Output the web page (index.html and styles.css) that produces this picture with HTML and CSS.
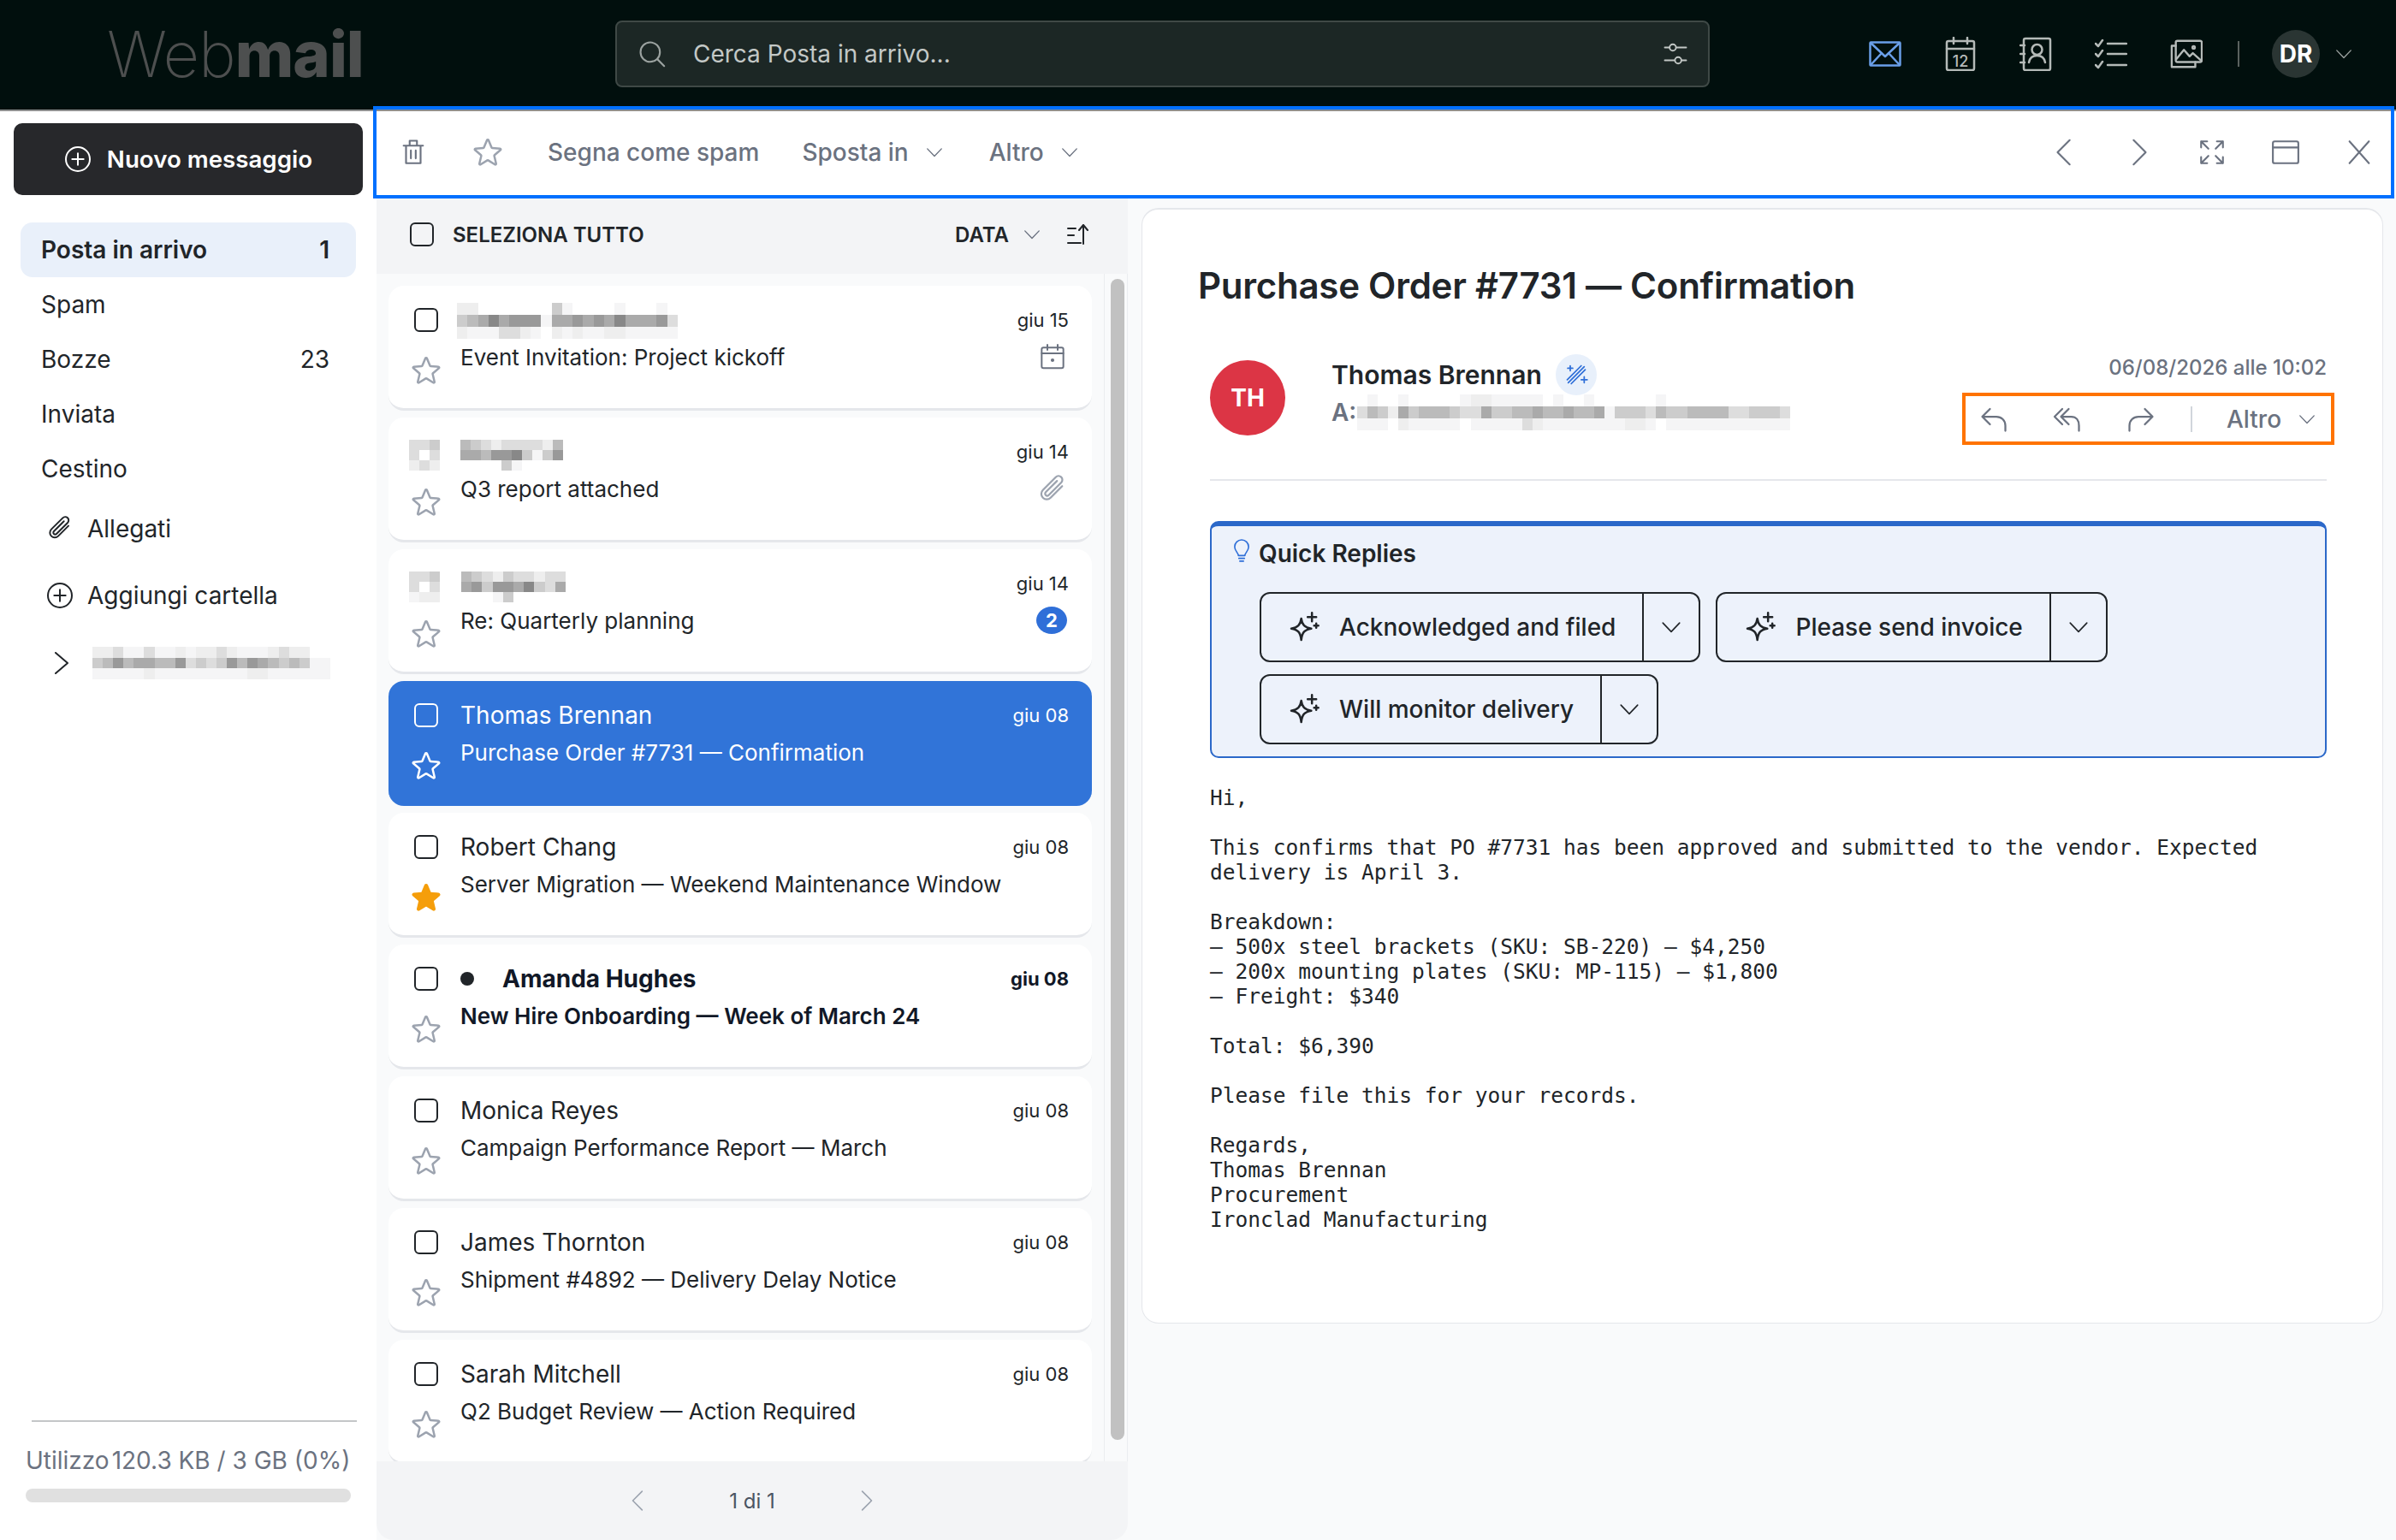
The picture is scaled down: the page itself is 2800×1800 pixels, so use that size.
FILE: index.html
```html
<!DOCTYPE html>
<html lang="it">
<head>
    <meta charset="UTF-8">
    <title>Webmail</title>
    <link rel="stylesheet" href="styles.css">
</head>
<body>
    <svg class="defs" width="0" height="0">
        <symbol id="i-star" viewBox="0 0 24 24"><path d="M11.48 3.499a.562.562 0 0 1 1.04 0l2.125 5.111a.563.563 0 0 0 .475.345l5.518.442c.499.04.701.663.321.988l-4.204 3.602a.563.563 0 0 0-.182.557l1.285 5.385a.562.562 0 0 1-.84.61l-4.725-2.885a.562.562 0 0 0-.586 0L6.982 20.54a.562.562 0 0 1-.84-.61l1.285-5.386a.562.562 0 0 0-.182-.557l-4.204-3.602a.562.562 0 0 1 .321-.988l5.518-.442a.563.563 0 0 0 .475-.345L11.48 3.5Z"/></symbol>
        <symbol id="i-down" viewBox="0 0 24 24"><path d="M3 7.500l9 9.500 9-9.500"/></symbol>
        <symbol id="i-left" viewBox="0 0 24 24"><path d="M16 2L6 12l10 10"/></symbol>
        <symbol id="i-right" viewBox="0 0 24 24"><path d="M8 2l10 10L8 22"/></symbol>
        <symbol id="i-plus-circle" viewBox="0 0 24 24"><circle cx="12" cy="12" r="10.500"/><path d="M12 7v10M7 12h10"/></symbol>
        <symbol id="i-clip" viewBox="0 0 24 24"><path d="M19.500 9.500l-9 9a4.200 4.200 0 0 1-6-6l10-10a3 3 0 0 1 4.300 4.200l-9.800 9.800a1.600 1.600 0 0 1-2.300-2.300l8.800-8.800"/></symbol>
        <symbol id="i-sparkle" viewBox="0 0 24 24"><path d="M10 6c.6 4.400 2.400 6.200 7 7-4.600.8-6.400 2.600-7 8-.6-5.400-2.400-7.200-7-8 4.600-.8 6.400-2.600 7-7zM17.500 2v6M14.500 5h6M20.500 9.500v3M19 11h3"/></symbol>
    </svg>

    <header class="topbar">
        <div class="logo"><span class="logo-web">Web</span><span class="logo-mail">mail</span></div>
        <div class="search">
            <svg class="search-icon" viewBox="0 0 24 24"><circle cx="10.500" cy="10.500" r="8"/><path d="M16.500 16.500L22 22"/></svg>
            <span class="search-text">Cerca Posta in arrivo...</span>
            <svg class="search-filter" viewBox="0 0 24 24"><path d="M13 6h9M2 18h9M2 6h4M18 18h4"/><circle cx="9.500" cy="6" r="3"/><circle cx="14.500" cy="18" r="3"/></svg>
        </div>
        <nav class="apps">
            <svg class="app-icon app-mail" viewBox="0 0 38 30"><rect x="1.500" y="1.500" width="35" height="27" rx="1"/><path d="M2 2l17 16L36 2M2 28l13-14M36 28L23 14"/></svg>
            <svg class="app-icon" viewBox="0 0 38 40"><rect x="3" y="5" width="32" height="34" rx="2"/><path d="M3 14h32M11 1v7M27 1v7"/><text class="cal-day" x="19" y="35" text-anchor="middle">12</text></svg>
            <svg class="app-icon" viewBox="0 0 38 40"><rect x="5" y="2" width="31" height="37" rx="2"/><path d="M1 10h5M1 20h5M1 30h5"/><circle cx="20.500" cy="15" r="6"/><path d="M11 30c1-6 5-8 9.500-8s8.500 2 9.500 8"/></svg>
            <svg class="app-icon" viewBox="0 0 38 36"><path d="M1 6l3 3 5-7M1 18l3 3 5-7M1 31l3 3 5-7M15 6h22M15 18h22M15 31h22"/></svg>
            <svg class="app-icon" viewBox="0 0 40 36"><rect x="7" y="2" width="32" height="26" rx="2"/><path d="M7 8H2v26h29v-6M8 24l9-11 7 8 4-4 10 9"/><circle cx="29" cy="10" r="1.500"/></svg>
            <span class="apps-sep"></span>
            <span class="user">DR</span>
            <svg class="chev user-chev" viewBox="0 0 24 24"><use href="#i-down"/></svg>
        </nav>
    </header>

    <div class="main">
        <aside class="sidebar">
            <button class="compose"><svg class="compose-icon"><use href="#i-plus-circle"/></svg>Nuovo messaggio</button>
            <ul class="folders">
                <li class="folder active"><span>Posta in arrivo</span><span>1</span></li>
                <li class="folder"><span>Spam</span></li>
                <li class="folder"><span>Bozze</span><span>23</span></li>
                <li class="folder"><span>Inviata</span></li>
                <li class="folder"><span>Cestino</span></li>
            </ul>
            <div class="side-link side-clip"><svg class="side-icon"><use href="#i-clip"/></svg>Allegati</div>
            <div class="side-link side-add"><svg class="side-icon"><use href="#i-plus-circle"/></svg>Aggiungi cartella</div>
            <div class="side-link side-account">
                <svg class="side-chev" viewBox="0 0 18 26"><path d="M2 1l14 12L2 25"/></svg>
                <div class="blur blur-account" data-rows="eedffdffefeedefffedee..|cb9baabb9dcdc9b9abcbcff|fffffefffffffffeeffffff"></div>
            </div>
            <div class="usage">
                <div class="usage-text">Utilizzo<span class="usage-val">120.3 KB / 3 GB (0%)</span></div>
                <div class="usage-bar"></div>
            </div>
        </aside>

        <div class="content">
            <div class="toolbar">
                <svg class="tb-icon" viewBox="0 0 24 24"><path d="M4 6.500h16M6 6.500V21h12V6.500M9 6V2.500h6V6M10 10.500v6.500M14 10.500v6.500"/></svg>
                <svg class="tb-star"><use href="#i-star"/></svg>
                <span class="tb-btn">Segna come spam</span>
                <span class="tb-btn">Sposta in<svg class="chev"><use href="#i-down"/></svg></span>
                <span class="tb-btn tb-more">Altro<svg class="chev"><use href="#i-down"/></svg></span>
                <div class="tb-right">
                    <svg class="tb-icon"><use href="#i-left"/></svg>
                    <svg class="tb-icon"><use href="#i-right"/></svg>
                    <svg class="tb-icon" viewBox="0 0 24 24"><path d="M3 8V3h5M3 3l6 6M21 8V3h-5M21 3l-6 6M3 16v5h5M3 21l6-6M21 16v5h-5M21 21l-6-6"/></svg>
                    <svg class="tb-icon" viewBox="0 0 24 24"><rect x="1.500" y="3" width="21" height="18" rx="1.500"/><path d="M1.500 8h21"/></svg>
                    <svg class="tb-icon" viewBox="0 0 24 24"><path d="M4 3l16 18M20 3L4 21"/></svg>
                </div>
            </div>

            <div class="panes">
                <section class="list-pane">
                    <div class="list-head">
                        <span class="check"></span>
                        <span class="select-all">Seleziona tutto</span>
                        <span class="sort">Data<svg class="chev"><use href="#i-down"/></svg></span>
                        <svg class="sort-icon" viewBox="0 0 26 26"><path d="M1 6h9M1 14h7M1 23h15M19 24V2M14 8l5-6 5 6"/></svg>
                    </div>
                    <div class="list-scroll">
                        <div class="messages">
                            <article class="msg">
                                <div class="msg-side"><span class="check"></span><svg class="star"><use href="#i-star"/></svg></div>
                                <div class="msg-body">
                                    <div class="msg-top">
                                        <div class="blur blur-name1" data-rows="ee.......cf....f...f.|cba8a999faa9a9a8aaa9d|efffddef.efeffeefffff"></div>
                                        <span class="msg-date">giu 15</span>
                                    </div>
                                    <div class="msg-sub"><span>Event Invitation: Project kickoff</span>
                                        <svg class="msg-flag" viewBox="0 0 24 24"><rect x="2.500" y="4" width="19" height="18" rx="1.500"/><path d="M2.500 9h19M7.500 1.500V6M16.500 1.500V6"/><circle cx="12" cy="15" r=".8"/></svg>
                                    </div>
                                </div>
                            </article>
                            <article class="msg">
                                <div class="msg-side"><div class="blur blur-avatar" data-rows="ddc|d.d|ede"></div><svg class="star"><use href="#i-star"/></svg></div>
                                <div class="msg-body">
                                    <div class="msg-top">
                                        <div class="blur blur-name2" data-rows="bcdeddddeb|aab998cfc9|....cf...."></div>
                                        <span class="msg-date">giu 14</span>
                                    </div>
                                    <div class="msg-sub"><span>Q3 report attached</span><svg class="msg-flag msg-clip"><use href="#i-clip"/></svg></div>
                                </div>
                            </article>
                            <article class="msg">
                                <div class="msg-side"><div class="blur blur-avatar" data-rows="ddc|d.d|fee"></div><svg class="star"><use href="#i-star"/></svg></div>
                                <div class="msg-body">
                                    <div class="msg-top">
                                        <div class="blur blur-name3" data-rows="bcdecddedd|a9c99a8cda|...fc....."></div>
                                        <span class="msg-date">giu 14</span>
                                    </div>
                                    <div class="msg-sub"><span>Re: Quarterly planning</span><span class="count">2</span></div>
                                </div>
                            </article>
                            <article class="msg selected">
                                <div class="msg-side"><span class="check"></span><svg class="star"><use href="#i-star"/></svg></div>
                                <div class="msg-body">
                                    <div class="msg-top"><span class="msg-from">Thomas Brennan</span><span class="msg-date">giu 08</span></div>
                                    <div class="msg-sub"><span>Purchase Order #7731 — Confirmation</span></div>
                                </div>
                            </article>
                            <article class="msg">
                                <div class="msg-side"><span class="check"></span><svg class="star starred"><use href="#i-star"/></svg></div>
                                <div class="msg-body">
                                    <div class="msg-top"><span class="msg-from">Robert Chang</span><span class="msg-date">giu 08</span></div>
                                    <div class="msg-sub"><span>Server Migration — Weekend Maintenance Window</span></div>
                                </div>
                            </article>
                            <article class="msg unread">
                                <div class="msg-side"><span class="check"></span><svg class="star"><use href="#i-star"/></svg></div>
                                <div class="msg-body">
                                    <div class="msg-top"><span class="dot"></span><span class="msg-from">Amanda Hughes</span><span class="msg-date">giu 08</span></div>
                                    <div class="msg-sub"><span>New Hire Onboarding — Week of March 24</span></div>
                                </div>
                            </article>
                            <article class="msg">
                                <div class="msg-side"><span class="check"></span><svg class="star"><use href="#i-star"/></svg></div>
                                <div class="msg-body">
                                    <div class="msg-top"><span class="msg-from">Monica Reyes</span><span class="msg-date">giu 08</span></div>
                                    <div class="msg-sub"><span>Campaign Performance Report — March</span></div>
                                </div>
                            </article>
                            <article class="msg">
                                <div class="msg-side"><span class="check"></span><svg class="star"><use href="#i-star"/></svg></div>
                                <div class="msg-body">
                                    <div class="msg-top"><span class="msg-from">James Thornton</span><span class="msg-date">giu 08</span></div>
                                    <div class="msg-sub"><span>Shipment #4892 — Delivery Delay Notice</span></div>
                                </div>
                            </article>
                            <article class="msg">
                                <div class="msg-side"><span class="check"></span><svg class="star"><use href="#i-star"/></svg></div>
                                <div class="msg-body">
                                    <div class="msg-top"><span class="msg-from">Sarah Mitchell</span><span class="msg-date">giu 08</span></div>
                                    <div class="msg-sub"><span>Q2 Budget Review — Action Required</span></div>
                                </div>
                            </article>
                        </div>
                        <div class="scrollbar"><div class="thumb"></div></div>
                    </div>
                    <div class="pager">
                        <svg class="pager-icon"><use href="#i-left"/></svg>
                        <span class="pager-text">1 di 1</span>
                        <svg class="pager-icon"><use href="#i-right"/></svg>
                    </div>
                </section>

                <section class="reader">
                    <div class="card">
                        <h1 class="subject">Purchase Order #7731 — Confirmation</h1>
                        <div class="mail-head">
                            <div class="avatar">TH</div>
                            <div class="who">
                                <div class="who-name">Thomas Brennan
                                    <span class="magic"><svg class="magic-icon" viewBox="0 0 24 24"><path d="M4 20L20 4M7 21l14-14M3 17L17 3M6 3v5M3.500 5.500h5M20 14v6M17 17h6"/></svg></span>
                                </div>
                                <div class="who-to"><span class="to-label">A:</span>
                                    <div class="blur blur-to" data-rows=".f..f.....feefffff.f..f......f............|dbceacbbbcddaccbbabbabbafcccdbccbbbbddcccd|fff.efffff.fffffdeffffffffeef.ffffffffffff"></div>
                                </div>
                            </div>
                            <div class="mail-meta">
                                <div class="mail-date">06/08/2026 alle 10:02</div>
                                <div class="actions">
                                    <svg class="act-icon" viewBox="0 0 24 24"><path d="M9 4L3 10l6 6M3 10h11c4 0 7 3 7 7v4"/></svg>
                                    <svg class="act-icon" viewBox="0 0 24 24"><path d="M8 4l-6 6 6 6M13 4l-6 6 6 6M7 10h8c4 0 6 3 6 7v4"/></svg>
                                    <svg class="act-icon" viewBox="0 0 24 24"><path d="M15 4l6 6-6 6M21 10H10c-4 0-7 3-7 7v4"/></svg>
                                    <span class="act-sep"></span>
                                    <span class="act-more">Altro</span>
                                    <svg class="chev"><use href="#i-down"/></svg>
                                </div>
                            </div>
                        </div>

                        <div class="quick">
                            <div class="quick-title">
                                <svg class="bulb" viewBox="0 0 24 24"><path d="M8.500 17c0-3-4-5-4-9.500a7.500 7.500 0 0 1 15 0c0 4.500-4 6.500-4 9.500zM9 20h6M10 23h4"/></svg>
                                Quick Replies
                            </div>
                            <div class="quick-btns">
                                <div class="qr"><span class="qr-main"><svg class="qr-icon"><use href="#i-sparkle"/></svg>Acknowledged and filed</span><span class="qr-more"><svg class="qr-chev"><use href="#i-down"/></svg></span></div>
                                <div class="qr"><span class="qr-main"><svg class="qr-icon"><use href="#i-sparkle"/></svg>Please send invoice</span><span class="qr-more"><svg class="qr-chev"><use href="#i-down"/></svg></span></div>
                                <div class="qr"><span class="qr-main"><svg class="qr-icon"><use href="#i-sparkle"/></svg>Will monitor delivery</span><span class="qr-more"><svg class="qr-chev"><use href="#i-down"/></svg></span></div>
                            </div>
                        </div>

                        <pre class="mail-text">Hi,

This confirms that PO #7731 has been approved and submitted to the vendor. Expected
delivery is April 3.

Breakdown:
– 500x steel brackets (SKU: SB-220) — $4,250
– 200x mounting plates (SKU: MP-115) — $1,800
– Freight: $340

Total: $6,390

Please file this for your records.

Regards,
Thomas Brennan
Procurement
Ironclad Manufacturing</pre>
                    </div>
                </section>
            </div>
        </div>
    </div>
    <script src="pixels.js"></script>
</body>
</html>
```

FILE: styles.css
```css
* {
    box-sizing: border-box;
}
html, body {
    margin: 0;
    height: 100%;
}
body {
    width: 2800px;
    height: 1800px;
    overflow: hidden;
    background: #fff;
    color: #212529;
    font-family: Inter, "Liberation Sans", sans-serif;
    font-size: 28px;
}
svg {
    display: block;
    flex: none;
    fill: none;
    stroke: currentColor;
    stroke-width: 1.5;
    stroke-linecap: round;
    stroke-linejoin: round;
}
.defs {
    position: absolute;
}
.chev {
    width: 22px;
    height: 22px;
    color: #6b7280;
}

/* pixelated blocks */
.blur {
    display: grid;
    flex: none;
}

/* top bar */
.topbar {
    display: flex;
    align-items: center;
    height: 130px;
    padding-bottom: 2px;
    background: #010f0d;
    border-bottom: 2px solid #8f8f8f;
}
.logo {
    width: 719px;
    padding-left: 125px;
    color: #4d4f4f;
    font-size: 74px;
    line-height: 1;
    letter-spacing: -1px;
}
.logo-web {
    font-weight: 200;
}
.logo-mail {
    font-weight: 800;
}
.search {
    display: flex;
    align-items: center;
    width: 1279px;
    height: 78px;
    padding: 0 23px 0 24px;
    background: #1c2725;
    border: 2px solid #3f4946;
    border-radius: 8px;
    color: #c3c8c6;
}
.search-icon {
    width: 34px;
    height: 34px;
    color: #9ba2a0;
}
.search-text {
    margin-left: 31px;
    flex: 1;
}
.search-filter {
    width: 30px;
    height: 30px;
}
.apps {
    display: flex;
    align-items: center;
    margin-left: 186px;
    color: #b5bab8;
}
.app-icon {
    width: 38px;
    height: 40px;
    margin-right: 50px;
    stroke-width: 2.5;
}
.app-mail {
    height: 30px;
    color: #6a9fe8;
}
.cal-day {
    fill: currentColor;
    stroke: none;
    font-size: 18px;
    font-weight: 500;
}
.apps-sep {
    width: 2px;
    height: 30px;
    margin: 0 38px 0 -9px;
    background: #5a625f;
}
.user {
    display: flex;
    align-items: center;
    justify-content: center;
    width: 56px;
    height: 56px;
    border-radius: 50%;
    background: #2a3533;
    color: #fff;
    font-weight: 700;
}
.user-chev {
    margin-left: 17px;
    color: #9ba2a0;
}

/* layout */
.main {
    display: flex;
    height: 1670px;
}
.sidebar {
    display: flex;
    flex-direction: column;
    width: 440px;
    padding: 14px 0 44px;
}
.content {
    flex: 1;
    display: flex;
    flex-direction: column;
    min-width: 0;
}

/* sidebar */
.compose {
    display: flex;
    align-items: center;
    justify-content: center;
    gap: 18px;
    width: 408px;
    height: 84px;
    margin-left: 16px;
    border: 0;
    border-radius: 10px;
    background: #27282b;
    color: #fff;
    font: 600 27.7px Inter, sans-serif;
}
.compose-icon {
    width: 32px;
    height: 32px;
}
.folders {
    list-style: none;
    margin: 32px 0 0;
    padding: 0;
}
.folder {
    display: flex;
    justify-content: space-between;
    align-items: center;
    width: 392px;
    height: 64px;
    margin-left: 24px;
    padding: 0 31px 0 24px;
}
.folder.active {
    background: #e9f0fa;
    border-radius: 14px;
    font-weight: 600;
}
.side-link {
    display: flex;
    align-items: center;
    padding-left: 54px;
    gap: 16px;
}
.side-clip {
    margin-top: 9px;
    height: 58px;
}
.side-add {
    margin-top: 20px;
    height: 58px;
}
.side-account {
    margin-top: 31px;
    height: 38px;
    padding-left: 63px;
    gap: 27px;
}
.side-icon {
    width: 32px;
    height: 32px;
}
.side-chev {
    width: 18px;
    height: 26px;
    stroke-width: 2;
}
.blur-account {
    width: 278px;
    height: 38px;
}
.usage {
    margin-top: auto;
    margin-left: 30px;
    width: 380px;
}
.usage-text {
    height: 74px;
    padding-top: 27px;
    margin-left: 7px;
    margin-right: -7px;
    border-top: 2px solid #c4c6c8;
    color: #6b7280;
    font-size: 28px;
    line-height: 36px;
    white-space: nowrap;
    text-indent: -7px;
}
.usage-val {
    margin-left: 3px;
}
.usage-bar {
    height: 16px;
    margin-top: 6px;
    border-radius: 8px;
    background: #e0e0e0;
}

/* toolbar */
.toolbar {
    position: relative;
    z-index: 2;
    display: flex;
    align-items: center;
    gap: 50px;
    width: 2354px;
    height: 100px;
    margin-top: -2px;
    padding: 0 20px 0 26px;
    background: #fff;
    outline: 4px solid #0070ff;
    box-shadow: inset 0 2px 0 #8f8f8f;
    color: #6b7280;
    font-weight: 500;
}
.tb-icon {
    width: 34px;
    height: 34px;
}
.tb-star {
    width: 40px;
    height: 40px;
    color: #9ca3af;
}
.tb-btn {
    display: flex;
    align-items: center;
    gap: 19px;
}
.tb-more {
    margin-left: 3px;
}
.tb-right {
    display: flex;
    gap: 52px;
    margin-left: auto;
}

.panes {
    flex: 1;
    display: flex;
    min-height: 0;
}

/* message list */
.list-pane {
    display: flex;
    flex-direction: column;
    width: 878px;
    background: #f9fafb;
}
.list-head {
    display: flex;
    align-items: center;
    height: 92px;
    padding: 0 45px 0 39px;
    background: #f3f4f6;
    font-size: 24px;
    font-weight: 600;
}
.check {
    display: block;
    flex: none;
    width: 28px;
    height: 28px;
    border: 2px solid #212529;
    border-radius: 6px;
}
.select-all {
    margin-left: 22px;
    text-transform: uppercase;
}
.sort {
    display: flex;
    align-items: center;
    gap: 16px;
    margin-left: auto;
    text-transform: uppercase;
}
.sort-icon {
    width: 26px;
    height: 26px;
    margin-left: 30px;
    stroke-width: 2;
}
.list-scroll {
    flex: 1;
    display: flex;
    min-height: 0;
}
.messages {
    flex: 1;
    padding: 14px 14px 0;
    overflow: hidden;
}
.scrollbar {
    width: 28px;
    padding: 6px 4px 0 7px;
    border-left: 1px solid #ebedf0;
    border-right: 1px solid #ebedf0;
}
.thumb {
    width: 16px;
    height: 1357px;
    border-radius: 8px;
    background: #c1c1c1;
}
.msg {
    display: flex;
    height: 146px;
    margin-bottom: 8px;
    padding: 26px 27px 0 16px;
    background: #fff;
    border-bottom: 3px solid #e5e7eb;
    border-radius: 18px;
}
.msg-side {
    display: flex;
    flex-direction: column;
    align-items: center;
    width: 68px;
    padding-right: 12px;
    flex: none;
}
.star {
    width: 40px;
    height: 40px;
    margin-top: 25px;
    color: #9ca3af;
}
.msg-body {
    flex: 1;
    min-width: 0;
    margin-top: -3px;
}
.msg-top, .msg-sub {
    display: flex;
    align-items: center;
    justify-content: space-between;
    height: 34px;
}
.msg-sub {
    margin-top: 9px;
    font-size: 26px;
}
.msg-date {
    margin-left: auto;
    font-size: 22px;
}
.msg-flag {
    width: 32px;
    height: 32px;
    margin-right: 3px;
    color: #6b7280;
}
.msg-clip {
    width: 36px;
    height: 36px;
    margin-right: 1px;
    margin-top: 2px;
    color: #9ca3af;
}
.count {
    display: flex;
    align-items: center;
    justify-content: center;
    width: 36px;
    height: 32px;
    margin-right: 2px;
    border-radius: 50%;
    background: #2f6fd8;
    color: #fff;
    font-size: 22px;
    font-weight: 700;
}
.msg.selected {
    background: #3174d8;
    border-bottom-color: #3174d8;
    color: #fff;
}
.msg.selected .check {
    border-color: #fff;
}
.msg.selected .star {
    color: #fff;
}
.star.starred {
    color: #f59e0b;
    fill: #f59e0b;
}
.msg.unread {
    color: #111827;
    font-weight: 600;
}
.msg.unread .msg-from, .msg.unread .msg-date {
    font-weight: 700;
}
.dot {
    width: 16px;
    height: 16px;
    margin-right: 33px;
    border-radius: 50%;
    background: #212529;
}
.blur-name1 {
    width: 258px;
    height: 42px;
    margin: 2px 0 0 -4px;
}
.blur-avatar {
    width: 36px;
    height: 36px;
    margin-left: -4px;
}
.blur-avatar + .star {
    margin-top: 17px;
}
.blur-name2 {
    width: 120px;
    height: 36px;
    margin-top: 8px;
}
.blur-name3 {
    width: 122px;
    height: 36px;
    margin: 8px 0 0 1px;
}
.pager {
    display: flex;
    align-items: center;
    justify-content: center;
    gap: 93px;
    height: 92px;
    background: #f3f4f6;
    border-radius: 0 0 20px 20px;
    color: #4b5563;
    font-size: 24px;
}
.pager-icon {
    width: 26px;
    height: 28px;
    color: #9ca3af;
}

/* reader */
.reader {
    flex: 1;
    padding: 15px 15px 0 16px;
    background: #f9fafb;
}
.card {
    height: 1304px;
    padding: 58px 65px 0 79px;
    background: #fff;
    border: 1px solid #e5e7eb;
    border-top-width: 2px;
    border-radius: 20px;
}
.subject {
    margin: 0 0 0 -14px;
    height: 62px;
    font-size: 42px;
    font-weight: 600;
    line-height: 62px;
    letter-spacing: -.25px;
}
.mail-head {
    display: flex;
    height: 141px;
    margin-top: 56px;
    border-bottom: 2px solid #e5e7eb;
}
.avatar {
    display: flex;
    align-items: center;
    justify-content: center;
    width: 88px;
    height: 88px;
    border-radius: 50%;
    background: #dc3545;
    color: #fff;
    font-weight: 700;
}
.who {
    margin-left: 54px;
}
.who-name {
    display: flex;
    align-items: center;
    gap: 16px;
    height: 48px;
    margin-top: -7px;
    color: #212529;
    font-size: 30px;
    font-weight: 600;
}
.magic {
    display: flex;
    align-items: center;
    justify-content: center;
    width: 48px;
    height: 48px;
    border-radius: 50%;
    background: #e8f0fb;
}
.magic-icon {
    width: 28px;
    height: 28px;
    color: #2f6fd8;
}
.who-to {
    display: flex;
    align-items: center;
    height: 42px;
    margin-top: -1px;
    color: #6b7280;
    font-weight: 600;
}
.to-label {
    width: 30px;
}
.blur-to {
    width: 506px;
    height: 42px;
}
.mail-meta {
    margin-left: auto;
    display: flex;
    flex-direction: column;
    align-items: flex-end;
}
.mail-date {
    height: 28px;
    margin-top: -5px;
    margin-bottom: 15px;
    color: #6b7280;
    font-size: 24px;
    line-height: 28px;
    font-weight: 500;
}
.actions {
    display: flex;
    align-items: center;
    width: 435px;
    height: 61px;
    margin-right: -9px;
    padding-left: 15px;
    border: 4px solid #ff7300;
    color: #6b7280;
}
.act-icon {
    width: 36px;
    height: 36px;
    margin-right: 50px;
}
.act-sep {
    width: 2px;
    height: 30px;
    margin: 0 40px 0 -10px;
    background: #d1d5db;
}
.act-more {
    margin-right: 19px;
    font-weight: 500;
}
.quick {
    height: 277px;
    margin-top: 47px;
    padding: 14px 0 0 22px;
    background: #edf2fb;
    border: 2px solid #2b68c9;
    border-top-width: 6px;
    border-radius: 10px;
}
.quick-title {
    display: flex;
    align-items: center;
    gap: 7px;
    height: 36px;
    font-weight: 600;
}
.bulb {
    width: 26px;
    height: 30px;
    color: #2f6fd8;
    margin-top: -6px;
}
.quick-btns {
    display: flex;
    flex-wrap: wrap;
    gap: 14px 18px;
    width: 1100px;
    margin: 27px 0 0 34px;
}
.qr {
    display: flex;
    align-items: center;
    height: 82px;
    border: 2px solid #212529;
    border-radius: 12px;
    font-size: 28px;
    font-weight: 500;
}
.qr-main {
    display: flex;
    align-items: center;
    gap: 21px;
    height: 100%;
    padding: 0 31px 0 30px;
}
.qr-icon {
    width: 40px;
    height: 40px;
}
.qr-more {
    display: flex;
    align-items: center;
    justify-content: center;
    width: 66px;
    height: 100%;
    border-left: 2px solid #212529;
}
.qr-chev {
    width: 26px;
    height: 26px;
}
.mail-text {
    margin: 32px 0 0;
    color: #212529;
    font-family: "DejaVu Sans Mono", monospace;
    font-size: 24.5px;
    line-height: 29px;
}
```

FILE: pixels.js
```js
// draws the pixelated (censored) blocks from their data-rows strings
document.querySelectorAll('.blur').forEach(function (block) {
    var rows = block.dataset.rows.split('|');
    block.style.gridTemplateColumns = 'repeat(' + rows[0].length + ', 1fr)';
    block.style.gridTemplateRows = 'repeat(' + rows.length + ', 1fr)';
    rows.join('').split('').forEach(function (c) {
        var cell = document.createElement('span');
        if (c === 'f') {
            cell.style.background = '#f5f5f6';
        } else if (c !== '.') {
            cell.style.background = '#' + c + c + c;
        }
        block.appendChild(cell);
    });
});
```
